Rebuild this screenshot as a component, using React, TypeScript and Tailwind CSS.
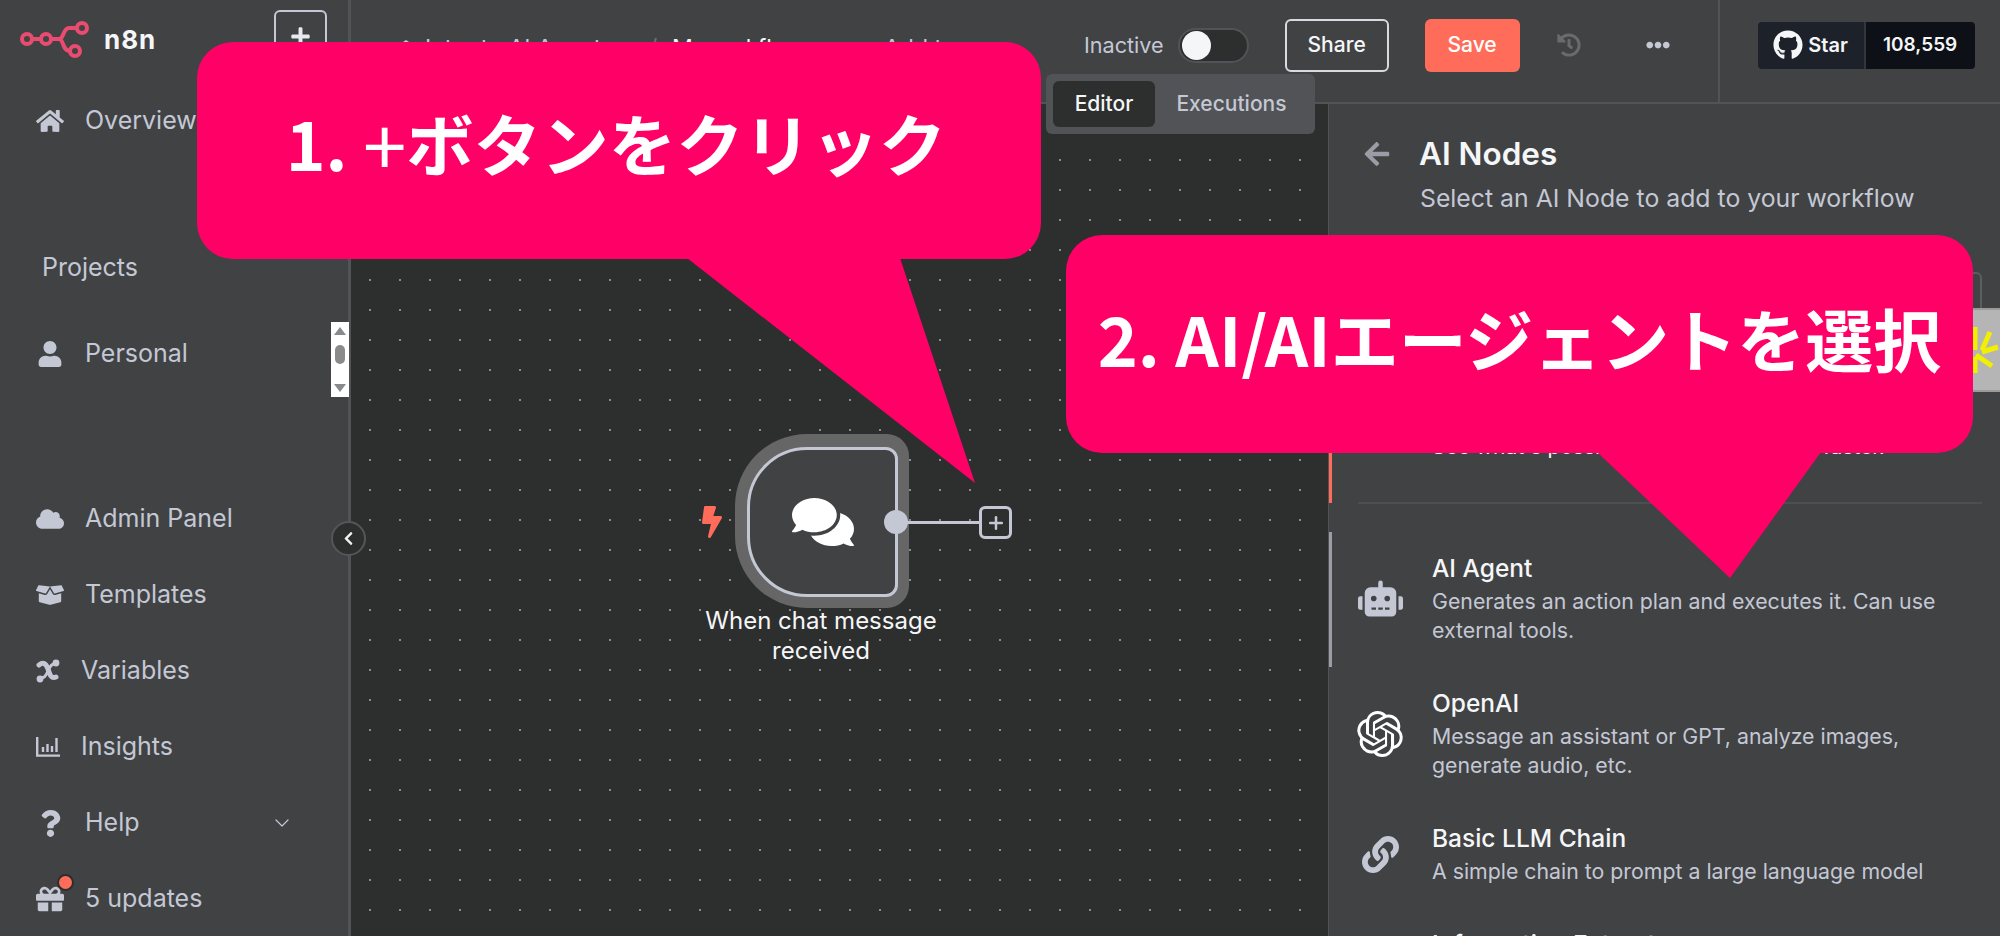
import React from 'react';
import {
  FaHome, FaUser, FaCloud, FaBoxOpen, FaQuestion, FaGift, FaComments, FaBolt,
  FaRobot, FaLink, FaHistory, FaEllipsisH, FaGithub, FaArrowLeft, FaPlus, FaChevronLeft,
} from 'react-icons/fa';
import { SiOpenai } from 'react-icons/si';
import { ChevronDown, Plus } from 'lucide-react';

const N8nLogo = () => (
  <svg width="72" height="40" viewBox="0 0 72 40" fill="none" stroke="#ea4b71" strokeWidth="4">
    <circle cx="7" cy="20" r="5" />
    <circle cx="26" cy="20" r="5" />
    <circle cx="62" cy="9" r="5" />
    <circle cx="55" cy="32" r="5" />
    <path d="M12 20h9M31 20h8c5 0 4-11 10-11h8M39 20c5 0 3 12 11 12" />
  </svg>
);

const VariableIcon = () => (
  <svg width="24" height="24" viewBox="0 0 24 24" fill="none" stroke="#c4c8d4" strokeLinecap="round">
    <path d="M3 6c4-3 7-2 9 4s3 10 8 8" strokeWidth="5" />
    <path d="M20 5c-4-1-6 2-8 7s-4 8-8 7" strokeWidth="3" />
    <circle cx="4" cy="20" r="3.4" fill="#c4c8d4" stroke="none" />
    <circle cx="20" cy="4" r="3.4" fill="#c4c8d4" stroke="none" />
  </svg>
);

const InsightsIcon = () => (
  <svg width="24" height="20" viewBox="0 0 24 20" fill="none" stroke="#c4c8d4" strokeWidth="2.4">
    <path d="M1.2 0v18.6H24" />
    <path d="M7 10v5M11.5 7v8M16 9v6M20.5 1v14" />
  </svg>
);

const NavItem = ({ icon, label, trailing }: { icon: React.ReactNode; label: string; trailing?: React.ReactNode }) => (
  <div className="flex items-center h-[40px] pl-[36px] gap-[21px] text-[25px] text-[#c4c8d4]">
    {icon}
    <span>{label}</span>
    {trailing}
  </div>
);

const NodeRow = ({ icon, title, desc }: { icon: React.ReactNode; title: string; desc: string }) => (
  <div className="flex items-center gap-[29px] pl-[28px]">
    <div className="w-[46px] flex justify-center shrink-0">{icon}</div>
    <div>
      <div className="text-[24.5px] leading-[32px] font-medium text-[#f5f6f8] whitespace-nowrap">{title}</div>
      <div className="text-[21.3px] leading-[29px] mt-[3px] text-[#c4c8d4] w-[530px]">{desc}</div>
    </div>
  </div>
);

const Sidebar = () => (
  <aside className="relative w-[351px] shrink-0 bg-[#414244] border-r-[3px] border-[#525356]">
    <div className="flex items-start h-[76px] pl-[20px] pt-[10px]">
      <div className="mt-[9px]"><N8nLogo /></div>
      <span className="ml-[12px] mt-[10px] text-[26px] font-bold tracking-[1px] text-[#f5f6f8]">n8n</span>
      <div className="ml-[118px] w-[53px] h-[53px] rounded-[6px] border-2 border-[#c4c8d4] flex items-center justify-center">
        <FaPlus size={21} color="#e8eaf0" />
      </div>
    </div>
    <div className="mt-[25px]"><NavItem icon={<FaHome size={28} color="#c4c8d4" />} label="Overview" /></div>
    <div className="mt-[107px] h-[40px] pl-[42px] flex items-center text-[25px] text-[#c4c8d4]">Projects</div>
    <div className="mt-[46px]"><NavItem icon={<span className="w-[28px] flex justify-center"><FaUser size={26} color="#c4c8d4" /></span>} label="Personal" /></div>
    <div className="mt-[125px] flex flex-col gap-[36px]">
      <NavItem icon={<FaCloud size={28} color="#c4c8d4" />} label="Admin Panel" />
      <NavItem icon={<FaBoxOpen size={28} color="#c4c8d4" />} label="Templates" />
      <NavItem icon={<VariableIcon />} label="Variables" />
      <NavItem icon={<InsightsIcon />} label="Insights" />
      <NavItem
        icon={<span className="w-[28px] flex justify-center"><FaQuestion size={27} color="#c4c8d4" /></span>}
        label="Help"
        trailing={<ChevronDown size={24} strokeWidth={1.2} className="ml-[109px] text-[#c4c8d4]" />}
      />
      <NavItem
        icon={
          <span className="relative w-[28px] flex">
            <FaGift size={28} color="#c4c8d4" />
            <span className="absolute -top-[9px] left-[23px] w-[13px] h-[13px] rounded-full bg-[#ff6d5a] ring-2 ring-[#2d2e2e]" />
          </span>
        }
        label="5 updates"
      />
    </div>

    {/* browser scrollbar */}
    <div className="absolute left-[331px] top-[322px] w-[18px] h-[75px] bg-white flex flex-col items-center justify-between py-[5px]">
      <div className="w-0 h-0 border-x-[6px] border-x-transparent border-b-[8px] border-b-[#8a8a8a]" />
      <div className="w-[10px] h-[19px] rounded-full bg-[#8a8a8a] mb-[10px]" />
      <div className="w-0 h-0 border-x-[6px] border-x-transparent border-t-[8px] border-t-[#8a8a8a]" />
    </div>

    {/* collapse button */}
    <div className="absolute left-[331px] top-[521px] w-[35px] h-[35px] rounded-full bg-[#2d2e2e] border-2 border-[#555659] flex items-center justify-center z-10">
      <FaChevronLeft size={15} color="#f0f1f4" />
    </div>
  </aside>
);

const TopBar = () => (
  <header className="relative flex items-center h-[104px] border-b-2 border-[#525356] pb-[12px]">
    <div className="flex items-center pl-[43px] w-[733px] mt-[7px] text-[23px] text-[#c4c8d4]">
      <svg width="24" height="22" viewBox="0 0 24 22" fill="#c4c8d4"><path d="M12 2 24 10 12 18 0 10z" /></svg>
      <span className="ml-[7px] w-[224px]">Intro to AI Agents</span>
      <span className="w-[23px] text-[#6f7074]">/</span>
      <span className="text-[#f5f6f8] w-[212px]">Manual flow</span>
      <span>Add tag</span>
    </div>
    <span className="text-[21.6px] text-[#c4c8d4]">Inactive</span>
    <div className="ml-[14px] w-[71px] h-[35px] rounded-full bg-[#2d2e2e] border-2 border-[#525356] flex items-center pl-[2px]">
      <div className="w-[29px] h-[29px] rounded-full bg-[#f5f6f8]" />
    </div>
    <div className="ml-[36px] w-[104px] h-[53px] rounded-[6px] border-2 border-[#d8dae2] flex items-center justify-center text-[21px] font-medium text-[#f5f6f8]">Share</div>
    <div className="ml-[36px] w-[95px] h-[53px] rounded-[6px] bg-[#ff6d5a] flex items-center justify-center text-[21px] font-medium text-white">Save</div>
    <div className="ml-[36px] w-[26px] flex justify-center"><FaHistory size={24} color="#6a6b6f" /></div>
    <div className="ml-[63px] w-[26px] flex justify-center"><FaEllipsisH size={24} color="#c4c8d4" /></div>
    <div className="ml-[47px] self-stretch -mb-[12px] w-[2px] bg-[#525356]" />
    <div className="ml-[38px] flex h-[47px] w-[217px] rounded-[4px] overflow-hidden text-[19px] font-semibold text-[#f5f6f8]">
      <div className="w-[108px] bg-[#1c212a] flex items-center justify-center gap-[5px] border-r-2 border-[#30363d] text-[20px]">
        <FaGithub size={30} /> <span>Star</span>
      </div>
      <div className="flex-1 bg-[#0d1117] flex items-center justify-center">108,559</div>
    </div>

    <div className="absolute left-[695px] top-[74px] w-[269px] h-[60px] rounded-[6px] bg-[#525356] flex items-center p-[7px] text-[21px] z-10">
      <div className="w-[102px] h-[46px] rounded-[6px] bg-[#2d2e2e] flex items-center justify-center font-medium text-[#f5f6f8]">Editor</div>
      <div className="flex-1 text-center font-medium text-[#c4c8d4]">Executions</div>
    </div>
  </header>
);

const NodePanel = () => (
  <section className="relative w-[672px] shrink-0 bg-[#414244] border-l border-[#525356] overflow-hidden">
    <div className="flex items-center gap-[28px] pl-[34px] pt-[30px] h-[70px]">
      <FaArrowLeft size={28} color="#9a9ca6" />
      <span className="text-[31.5px] font-semibold text-[#f5f6f8]">AI Nodes</span>
    </div>
    <div className="pl-[91px] mt-[6px] text-[24.8px] text-[#c4c8d4] whitespace-nowrap">Select an AI Node to add to your workflow</div>
    <div className="ml-[71px] mr-[18px] mt-[55px] h-[60px] rounded-[6px] border-2 border-[#5c5d61]" />
    <div className="absolute left-0 top-[250px] w-[3px] h-[149px] bg-[#ff6d5a]" />
    <div className="mt-[100px] pl-[103px] text-[21px] leading-[29px] text-[#f5f6f8] whitespace-nowrap">See what's possible and get started 5x faster.</div>
    <div className="ml-[29px] mr-[18px] mt-[41px] h-[2px] bg-[#4d4e51]" />
    <div className="absolute left-0 top-[428px] w-[3px] h-[135px] bg-[#9a9ca6]" />
    <div className="mt-[48px] flex flex-col gap-[42px]">
      <NodeRow icon={<FaRobot size={45} color="#c4c8d4" />} title="AI Agent" desc="Generates an action plan and executes it. Can use external tools." />
      <NodeRow icon={<SiOpenai size={46} color="#ffffff" />} title="OpenAI" desc="Message an assistant or GPT, analyze images, generate audio, etc." />
      <NodeRow icon={<FaLink size={37} color="#c4c8d4" />} title="Basic LLM Chain" desc="A simple chain to prompt a large language model" />
      <NodeRow icon={null} title="Information Extractor" desc="Extract structured data" />
    </div>

    {/* blocked widget peeking out at the edge */}
    <div className="absolute left-[644px] top-[204px] w-[27px] h-[84px] bg-[#b5b5b5] border-y-2 border-[#9a9a9a]">
      <svg width="27" height="80" viewBox="0 0 27 80" fill="none" stroke="#f0f000" strokeWidth="5">
        <path d="M2 17v23M17 22l-8 18M25 37 9 42M3 45l16 11M2 47v16" />
      </svg>
    </div>
  </section>
);

const Canvas = () => (
  <div className="relative flex-1 bg-[#2d2e2e] bg-[radial-gradient(circle_at_1px_1px,#8a8b8e_0.8px,transparent_1.1px)] bg-[size:30px_30px] bg-[position:18px_175px]">
    <div className="absolute left-[384px] top-[330px] w-[174px] h-[174px] rounded-l-[72px] rounded-r-[22px] bg-[#666666]" />
    <div className="absolute left-[396px] top-[343px] w-[151px] h-[150px] rounded-l-[60px] rounded-r-[12px] bg-[#414244] border-[3px] border-[#c4c8d4] flex items-center justify-center">
      <FaComments size={62} color="#ffffff" />
    </div>
    <FaBolt size={32} color="#ff6d5a" className="absolute left-[345px] top-[402px]" />
    <div className="absolute left-[545px] top-[417px] h-[3px] w-[84px] bg-[#c4c8d4]" />
    <div className="absolute left-[533px] top-[406px] w-[24px] h-[24px] rounded-full bg-[#c4c8d4]" />
    <div className="absolute left-[628px] top-[402px] w-[33px] h-[33px] rounded-[6px] bg-[#2d2e2e] border-[3px] border-[#c4c8d4] flex items-center justify-center">
      <Plus size={20} strokeWidth={3} color="#c4c8d4" />
    </div>
    <div className="absolute left-[330px] top-[502px] w-[280px] text-center text-[24px] leading-[30px] text-[#f5f6f8]">When chat message received</div>
  </div>
);

const Callout = ({ box, tail, children }: { box: string; tail: string; children: React.ReactNode }) => (
  <>
    <svg className="absolute left-0 top-0 z-20" width="2000" height="936" viewBox="0 0 2000 936">
      <polygon points={tail} fill="#ff0066" />
    </svg>
    <div className={`absolute z-20 rounded-[36px] bg-[#ff0066] flex items-center justify-center font-bold text-white whitespace-pre ${box}`}>
      {children}
    </div>
  </>
);

export default function App() {
  return (
    <div
      className="relative flex w-[2000px] h-[936px] overflow-hidden bg-[#414244]"
      style={{ fontFamily: 'Inter, "Noto Sans CJK JP", sans-serif' }}
    >
      <Sidebar />
      <main className="flex-1 flex flex-col min-w-0">
        <TopBar />
        <div className="flex-1 flex min-h-0">
          <Canvas />
          <NodePanel />
        </div>
      </main>

      <Callout
        box="left-[197px] top-[42px] w-[844px] h-[217px] text-[67.5px] pb-[18px] pr-[6px] [font-family:'Noto_Sans_CJK_JP',sans-serif]"
        tail="687,258 900,258 975,483"
      >
        1. <span className="font-normal text-[78px] leading-none">+</span>ボタンをクリック
      </Callout>
      <Callout
        box="left-[1066px] top-[235px] w-[907px] h-[218px] text-[68px] pb-[12px] [font-family:'Noto_Sans_CJK_JP',sans-serif]"
        tail="1597,452 1821,452 1730,578"
      >
        2. AI/AIエージェントを選択
      </Callout>
    </div>
  );
}
